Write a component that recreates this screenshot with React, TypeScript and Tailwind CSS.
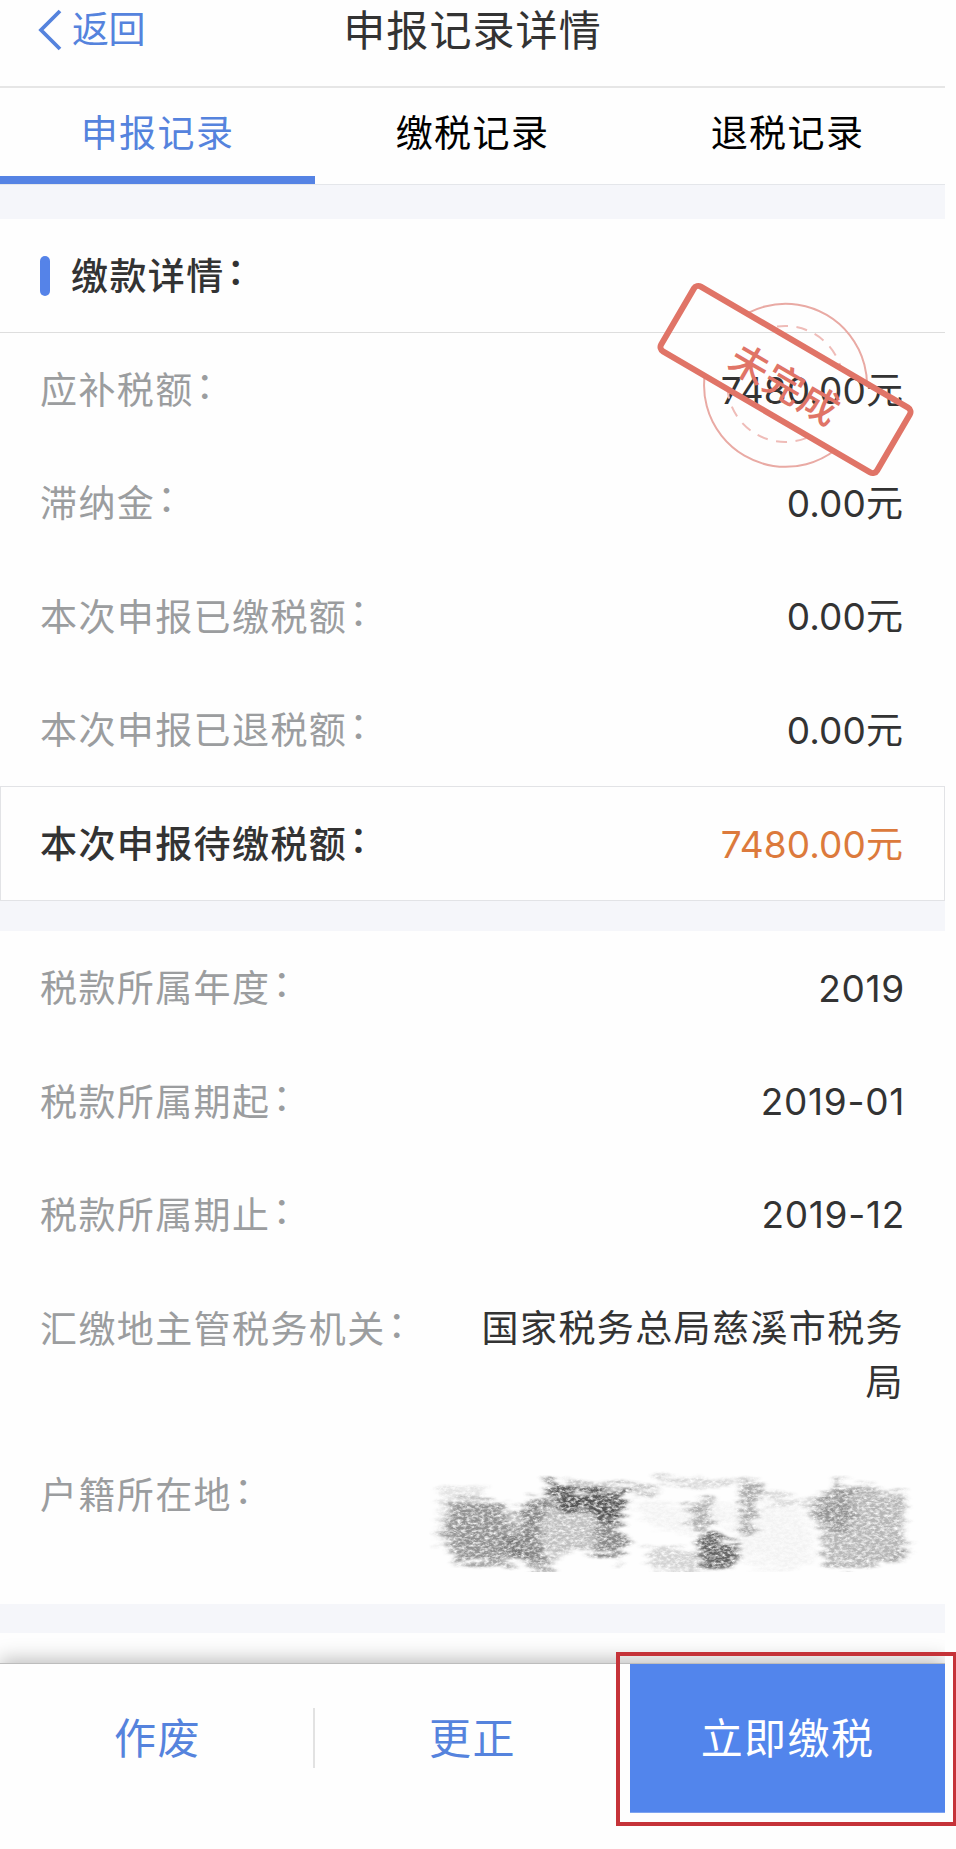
import { clsx } from 'clsx';

const tabs = ['申报记录', '缴税记录', '退税记录'];

const paymentRows = [
  { label: '应补税额:', value: '7480.00元' },
  { label: '滞纳金:', value: '0.00元' },
  { label: '本次申报已缴税额:', value: '0.00元' },
  { label: '本次申报已退税额:', value: '0.00元' },
];

const periodRows = [
  { label: '税款所属年度:', value: '2019' },
  { label: '税款所属期起:', value: '2019-01' },
  { label: '税款所属期止:', value: '2019-12' },
];

function Colon() {
  return <span className="relative -top-[5px] left-0.5">：</span>;
}

function Label({ text }: { text: string }) {
  return (
    <span className="shrink-0 pt-[3px] text-[#9b9d9f]">
      {text.replace(':', '')}
      <Colon />
    </span>
  );
}

function Row({ label, value }: { label: string; value: string }) {
  return (
    <div className="flex h-[113.3px] items-center justify-between pr-10 pl-10">
      <Label text={label} />
      <span className={clsx('pt-0.5 text-[#333]', value.endsWith('元') ? 'pr-0.5 tracking-[0.1px]' : 'tracking-[0.7px]')}>
        {value}
      </span>
    </div>
  );
}

function Stamp() {
  return (
    <svg className="absolute top-[50px] left-[640px] h-[220px] w-[290px]" viewBox="640 269 290 220" fill="none">
      <defs>
        <clipPath id="outside">
          <rect x="-150" y="-150" width="300" height="113" />
          <rect x="-150" y="37" width="300" height="113" />
        </clipPath>
      </defs>
      <g transform="translate(785.5 379.5) rotate(30.3)">
        <g clipPath="url(#outside)">
          <circle cx="3" cy="5" r="81.5" stroke="#e9aaa4" strokeWidth="2" />
          <circle cx="2" cy="4" r="58" stroke="#efbcb8" strokeWidth="2" strokeDasharray="11 8.5" />
        </g>
        <rect x="-125" y="-37.5" width="250" height="75" rx="5" stroke="#e07467" strokeWidth="6" />
        <text
          x="2"
          y="19"
          textAnchor="middle"
          fontSize="39"
          fontWeight="500"
          letterSpacing="1"
          fill="#e07467"
          fontFamily="Noto Sans CJK SC, sans-serif"
        >
          未完成
        </text>
      </g>
    </svg>
  );
}

// Pencil scribble that covers the private address
function Scribble() {
  return (
    <svg className="h-[106px] w-[496px]" viewBox="430 1474 496 106">
      <defs>
        <filter id="pencil" x="-10%" y="-20%" width="120%" height="140%">
          <feTurbulence type="fractalNoise" baseFrequency="0.03 0.22" numOctaves="3" seed="4" result="edge" />
          <feDisplacementMap in="SourceGraphic" in2="edge" scale="30" xChannelSelector="R" yChannelSelector="A" result="rough" />
          <feGaussianBlur in="rough" stdDeviation="2.4 0.8" result="soft" />
          <feTurbulence type="fractalNoise" baseFrequency="0.22 0.4" numOctaves="4" seed="9" result="noise" />
          <feColorMatrix in="noise" type="matrix" values="0 0 0 0 0  0 0 0 0 0  0 0 0 0 0  2 0 0 0 -0.25" result="grain" />
          <feComposite in="soft" in2="grain" operator="in" />
        </filter>
      </defs>
      <g filter="url(#pencil)" fill="#4a4a4a" transform="translate(4 8)">
        <path opacity="0.14" d="M438 1485L480 1487L478 1500L446 1500L446 1545L433 1548Z" />
        <path opacity="0.5" d="M447 1499L500 1500L510 1532L520 1566L449 1564L441 1540Z" />
        <path opacity="0.2" d="M449 1510L500 1505L506 1556L449 1556Z" />
        <path opacity="0.5" d="M524 1496L548 1498L534 1536L552 1574L532 1574L498 1546L518 1524Z" />
        <path opacity="0.35" d="M506 1506L590 1496L620 1510L622 1552L596 1556L566 1552L512 1562Z" />
        <path opacity="0.9" d="M540 1479L560 1488L626 1493L614 1520L590 1520L586 1508L556 1512Z" />
        <path opacity="0.45" d="M590 1514L622 1512L622 1558L594 1556Z" />
        <path opacity="0.32" d="M560 1480L645 1485L655 1496L580 1494Z" />
        <path opacity="0.22" d="M650 1479L735 1478L725 1486L654 1487Z" />
        <path opacity="0.4" d="M682 1504L710 1500L704 1520L712 1538L698 1542L692 1524Z" />
        <path opacity="0.24" d="M640 1546L700 1552L716 1574L650 1571Z" />
        <path opacity="0.85" d="M692 1538L740 1544L732 1564L702 1570Z" />
        <path opacity="0.45" d="M736 1483L760 1486L750 1512L748 1536L736 1534L740 1508Z" />
        <path opacity="0.2" d="M755 1488L800 1500L840 1482L830 1510L770 1504Z" />
        <path opacity="0.06" d="M630 1500L800 1510L810 1566L740 1566L730 1530L650 1530Z" />
        <path opacity="0.4" d="M830 1480L902 1492L900 1560L880 1568L822 1568L812 1528L806 1502L836 1502Z" />
        <path opacity="0.3" d="M832 1484L850 1490L848 1530L830 1534L812 1504Z" />
        <path opacity="0.25" d="M890 1548L910 1546L902 1556L888 1558Z" />
      </g>
    </svg>
  );
}

export default function App() {
  return (
    <div className="relative h-[1849px] w-[956px] overflow-hidden bg-[#fefefe] font-[Inter,'Noto_Sans_CJK_SC',sans-serif] text-[37px] leading-[54px] tracking-[1.4px]">
      <div className="flex h-full w-[945px] flex-col">
        {/* Header */}
        <header className="grid h-[88px] shrink-0 grid-cols-3 border-b-2 border-[#e6e6e6]">
          <div className="flex h-[60px] items-center gap-2.5 pl-[38px] tracking-[-0.5px] text-[#5583dd]">
            <svg className="h-11 w-6" viewBox="0 0 24 44" fill="none">
              <path d="M22 3L3 22L22 41" stroke="#5583dd" strokeWidth="3.8" />
            </svg>
            <span>返回</span>
          </div>
          <h1 className="flex h-[60px] items-center justify-center pt-px text-[42px] tracking-[1.1px] whitespace-nowrap text-[#333]">
            申报记录详情
          </h1>
        </header>

        {/* Tabs */}
        <nav className="grid h-[97px] shrink-0 grid-cols-3 border-b border-[#e4e6ea]">
          {tabs.map((tab, index) => (
            <button
              key={tab}
              className={clsx(
                'border-b-8 pt-1 text-center',
                index === 0 ? 'border-[#5583e4] text-[#5583dd]' : 'border-transparent text-black'
              )}
            >
              {tab}
            </button>
          ))}
        </nav>
        <div className="h-[34px] shrink-0 bg-[#f5f6fa]" />

        {/* Payment details */}
        <section className="relative shrink-0">
          <div className="flex h-[114px] items-center gap-[21px] border-b border-[#dedede] pl-10">
            <span className="h-10 w-2.5 rounded-full bg-[#5583e8]" />
            <h2 className="pt-0.5 font-medium text-[#333]">
              缴款详情
              <Colon />
            </h2>
          </div>
          {paymentRows.map((row) => (
            <Row key={row.label} {...row} />
          ))}
          <div className="flex h-[115px] items-center justify-between border border-[#e2e3e6] pr-[41px] pl-[39px]">
            <span className="pt-[3px] font-medium text-[#333]">
              本次申报待缴税额
              <Colon />
            </span>
            <span className="pt-0.5 tracking-[0.1px] text-[#dc7a3c]">7480.00元</span>
          </div>
          <Stamp />
        </section>
        <div className="h-[30px] shrink-0 bg-[#f5f6fa]" />

        {/* Tax period */}
        <section className="h-[673px] shrink-0">
          {periodRows.map((row) => (
            <Row key={row.label} {...row} />
          ))}
          <div className="flex h-[167px] justify-between pt-[29px] pr-[41px] pl-10">
            <Label text="汇缴地主管税务机关:" />
            <p className="w-[424px] pt-0.5 text-right text-[#333]">国家税务总局慈溪市税务局</p>
          </div>
          <div className="flex justify-between pt-[28px] pr-5 pl-10">
            <Label text="户籍所在地:" />
            <Scribble />
          </div>
        </section>
        <div className="h-[29px] shrink-0 bg-[#f5f6fa]" />

        {/* Bottom actions */}
        <footer className="mt-[30px] flex h-[150px] shrink-0 border-t border-[#bdbdbd] text-[42px] text-[#5583dd] shadow-[0_-4px_18px_rgba(0,0,0,0.25)] [clip-path:inset(-30px_0_0.5px_0)]">
          <button className="relative w-[315px]">
            作废
            <span className="absolute top-[44px] right-0 h-[60px] w-0.5 bg-[#e2e2e2]" />
          </button>
          <button className="w-[315px]">更正</button>
          <button className="w-[315px] bg-[#5285ec] text-white">立即缴税</button>
        </footer>
      </div>

      {/* Highlight around the pay button */}
      <div className="absolute top-[1652px] left-[616px] h-[174px] w-[341px] border-4 border-[#c53339]" />
    </div>
  );
}
